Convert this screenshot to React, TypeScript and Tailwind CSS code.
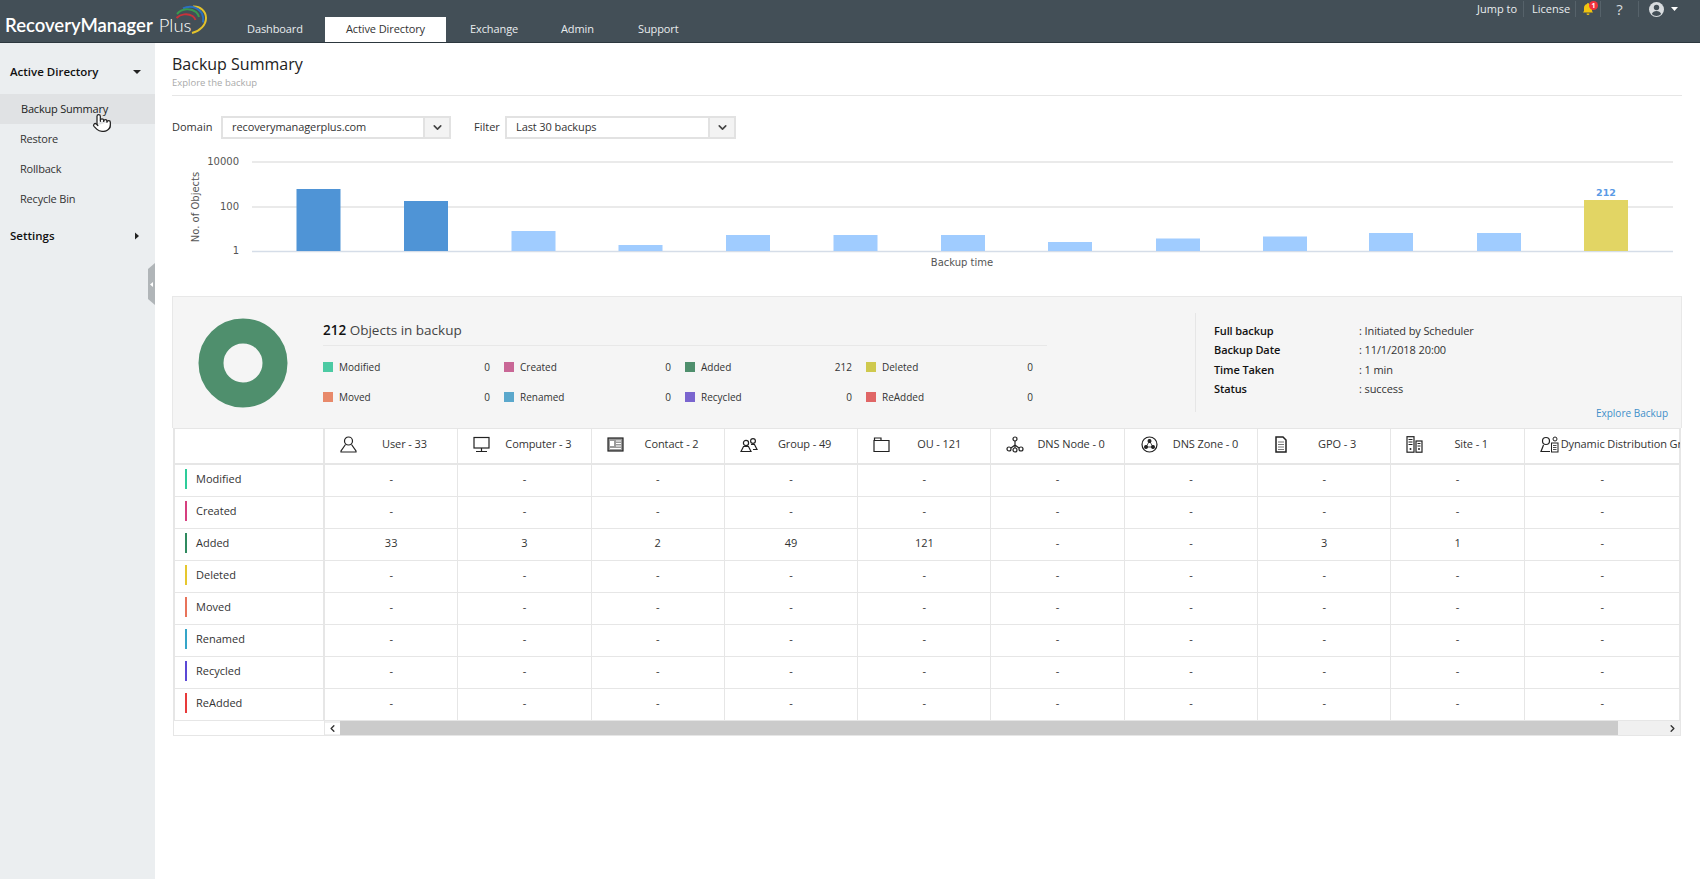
import { ChevronDown, ChevronLeft, ChevronRight, Pointer } from "lucide-react"
import type { ReactNode } from "react"

const bars = [
  { x: 124.5, top: 39, fill: "#4f94d6" },
  { x: 232, top: 51, fill: "#4f94d6" },
  { x: 339.5, top: 81, fill: "#a0ccff" },
  { x: 446.5, top: 95, fill: "#a0ccff" },
  { x: 554, top: 85, fill: "#a0ccff" },
  { x: 661.5, top: 85, fill: "#a0ccff" },
  { x: 769, top: 85, fill: "#a0ccff" },
  { x: 876, top: 92, fill: "#a0ccff" },
  { x: 984, top: 88.5, fill: "#a0ccff" },
  { x: 1091, top: 86.5, fill: "#a0ccff" },
  { x: 1197, top: 83, fill: "#a0ccff" },
  { x: 1305, top: 83, fill: "#a0ccff" },
  { x: 1412, top: 50, fill: "#e2d564" },
]

const legend = [
  { label: "Modified", value: "0", color: "bg-[#4ccaa3]" },
  { label: "Created", value: "0", color: "bg-[#c96796]" },
  { label: "Added", value: "212", color: "bg-[#4f8f6d]" },
  { label: "Deleted", value: "0", color: "bg-[#cfc94e]" },
  { label: "Moved", value: "0", color: "bg-[#e8896a]" },
  { label: "Renamed", value: "0", color: "bg-[#5ba8cc]" },
  { label: "Recycled", value: "0", color: "bg-[#7a65cf]" },
  { label: "ReAdded", value: "0", color: "bg-[#e06666]" },
]

const details = [
  ["Full backup", ": Initiated by Scheduler"],
  ["Backup Date", ": 11/1/2018 20:00"],
  ["Time Taken", ": 1 min"],
  ["Status", ": success"],
]

const Glyph = ({ w = 17, children }: { w?: number; children: ReactNode }) => (
  <svg width={w} height="17" viewBox={`0 0 ${w} 17`} fill="none" stroke="#222" strokeWidth="1.2" className="shrink-0">
    {children}
  </svg>
)

const columns: { title: string; pad: string; gap: string; icon: ReactNode }[] = [
  {
    title: "User - 33",
    pad: "pl-[15px]",
    gap: "gap-[25px]",
    icon: (
      <Glyph>
        <circle cx="8.5" cy="5" r="4" />
        <path d="M5.5 8.5 1 15v1h15v-1l-4.500-6.500" />
      </Glyph>
    ),
  },
  {
    title: "Computer - 3",
    pad: "pl-[15px]",
    gap: "gap-[15px]",
    icon: (
      <Glyph>
        <rect x="1" y="1.500" width="15" height="10.500" />
        <path d="M8.500 12v3M3 15.500h11" />
      </Glyph>
    ),
  },
  {
    title: "Contact - 2",
    pad: "pl-[15px]",
    gap: "gap-[21px]",
    icon: (
      <Glyph>
        <rect x="1" y="2" width="15" height="13" fill="#999" />
        <rect x="3" y="5" width="4" height="5" fill="#fff" stroke="none" />
        <path d="M9 5h5M9 7.500h5M9 10h5M3 12.500h11" stroke="#fff" strokeWidth="1" />
      </Glyph>
    ),
  },
  {
    title: "Group - 49",
    pad: "pl-[15px]",
    gap: "gap-[20px]",
    icon: (
      <Glyph w={18}>
        <circle cx="6" cy="7" r="2.600" />
        <circle cx="13" cy="5" r="2.400" />
        <path d="M1 15.500 3.500 10.500h5l2.500 5zM11 8.500h3.500l2.500 5h-4" />
      </Glyph>
    ),
  },
  {
    title: "OU - 121",
    pad: "pl-[15px]",
    gap: "gap-[27px]",
    icon: (
      <Glyph>
        <path d="M1 15.500V4.500h15v11zM1.500 4.500V2h6.500v2.500" />
      </Glyph>
    ),
  },
  {
    title: "DNS Node - 0",
    pad: "pl-[15px]",
    gap: "gap-[13px]",
    icon: (
      <Glyph w={18}>
        <circle cx="9" cy="3" r="2" />
        <circle cx="3" cy="13" r="2" />
        <circle cx="9" cy="14" r="2" />
        <circle cx="15" cy="13" r="2" />
        <path d="M9 5v7M5 12l4-3 4 3" />
      </Glyph>
    ),
  },
  {
    title: "DNS Zone - 0",
    pad: "pl-[16px]",
    gap: "gap-[15px]",
    icon: (
      <Glyph>
        <circle cx="8.500" cy="8.500" r="7.500" />
        <circle cx="8.500" cy="5" r="1.400" fill="#222" />
        <circle cx="5" cy="11" r="1.400" fill="#222" />
        <circle cx="12" cy="11" r="1.400" fill="#222" />
        <path d="M8.500 5 5 11h7z" strokeWidth="0.800" />
      </Glyph>
    ),
  },
  {
    title: "GPO - 3",
    pad: "pl-[17px]",
    gap: "gap-[31px]",
    icon: (
      <Glyph w={12}>
        <path d="M1 1h7l3 3v12H1z" strokeWidth="1.500" />
        <path d="M3 6h6M3 8.500h6M3 11h6M3 13.500h6" stroke="#777" strokeWidth="1" />
      </Glyph>
    ),
  },
  {
    title: "Site - 1",
    pad: "pl-[15px]",
    gap: "gap-[31px]",
    icon: (
      <Glyph>
        <rect x="1" y="0.700" width="7" height="15.500" />
        <rect x="10" y="5" width="6" height="11.200" />
        <path d="M2.500 3.500h4M2.500 6h4M2.500 8.500h4M11.500 7.500h3M11.500 10h3" strokeWidth="1" />
        <circle cx="4.500" cy="13" r="1" fill="#222" stroke="none" />
        <circle cx="13" cy="13" r="1" fill="#222" stroke="none" />
      </Glyph>
    ),
  },
  {
    title: "Dynamic Distribution Groups - 0",
    pad: "pl-[15px]",
    gap: "gap-[2px]",
    icon: (
      <Glyph w={19}>
        <circle cx="6" cy="5" r="3.500" />
        <path d="M3.500 9 1 15.500h9" />
        <circle cx="15" cy="3" r="2" strokeWidth="1" />
        <rect x="11.500" y="7" width="6.500" height="9" strokeWidth="1" />
        <path d="M13 9.500h3.500M13 11.500h3.500M13 13.500h3.500" strokeWidth="0.800" />
      </Glyph>
    ),
  },
]

const rows = [
  { label: "Modified", bar: "bg-[#2ecc9a]", values: [] as string[] },
  { label: "Created", bar: "bg-[#d63f7f]", values: [] as string[] },
  { label: "Added", bar: "bg-[#2f8a5f]", values: ["33", "3", "2", "49", "121", "-", "-", "3", "1", "-"] },
  { label: "Deleted", bar: "bg-[#e6c72e]", values: [] as string[] },
  { label: "Moved", bar: "bg-[#e8735a]", values: [] as string[] },
  { label: "Renamed", bar: "bg-[#35a5c8]", values: [] as string[] },
  { label: "Recycled", bar: "bg-[#5b48d6]", values: [] as string[] },
  { label: "ReAdded", bar: "bg-[#e83a3a]", values: [] as string[] },
]

const Caret = ({ right }: { right?: boolean }) => (
  <svg width="8" height="8" viewBox="0 0 8 8" fill="#222">
    {right ? <path d="M2 0.500 6 4 2 7.500z" /> : <path d="M0 2h8L4 6z" />}
  </svg>
)

const SelectBox = ({ value, width }: { value: string; width: string }) => (
  <div className={`flex h-[23px] ${width} items-center border-2 border-[#e2e2e2] bg-white`}>
    <span className="flex-1 pl-[9px] text-[11px] tracking-[-0.1px] text-[#333]">{value}</span>
    <span className="flex h-full w-[26px] items-center justify-center border-l-2 border-[#e2e2e2] bg-[#f3f3f3]">
      <ChevronDown size={13} strokeWidth={3} color="#444" />
    </span>
  </div>
)

export default function App() {
  return (
    <div className="flex h-[879px] w-[1700px] flex-col overflow-hidden bg-white font-['Open_Sans',sans-serif] text-[#333]">
      <header className="flex h-[43px] shrink-0 items-start justify-between border-b border-[#2c373e] bg-[#434f57]">
        <div className="flex h-full items-end">
          <div className="relative flex h-full w-[247px] items-center pl-[5px] pt-[9px] font-['Lato',sans-serif] text-[18.500px] whitespace-nowrap text-white">
            <span className="font-semibold">RecoveryManager</span>
            <span className="ml-[6px] font-light">Plus</span>
            <svg width="36" height="32" viewBox="0 0 36 32" fill="none" className="absolute left-[174px] top-[4px]">
              <path d="M19 2.500C26 2 32 7 32 14c0 7-6 13-14 15" stroke="#e3c22c" strokeWidth="2" />
              <path d="M9 4.500c6-3 14-2.500 19 5 1.500 3 1.500 6 1 9" stroke="#2c6fc0" strokeWidth="2" />
              <path d="M3 10c5-6 14-6 19-2 1.500 1.500 2.500 3 3 5" stroke="#3a9a50" strokeWidth="2" />
              <path d="M2.500 14c4-4 11-5 16-2 1.500 1 2.500 2.500 3 4" stroke="#c8323a" strokeWidth="2" />
            </svg>
          </div>
          <nav className="flex h-[25px] items-center text-[11px] tracking-[-0.1px] text-[#e9edef]">
            <span className="w-[78px]">Dashboard</span>
            <span className="flex h-full w-[121px] items-center justify-center bg-white text-[#333]">Active Directory</span>
            <span className="ml-[24px] w-[91px]">Exchange</span>
            <span className="w-[77px]">Admin</span>
            <span>Support</span>
          </nav>
        </div>
        <div className="flex h-[17px] items-center pt-[1px] text-[11px] text-[#e9edef]">
          <span className="w-[47px] border-r border-[#56626a] leading-[16px]">Jump to</span>
          <span className="w-[52px] border-r border-[#56626a] pl-[8px] leading-[16px]">License</span>
          <span className="relative flex h-full w-[25px] items-center border-r border-[#56626a] pl-[7px]">
            <svg width="10" height="12" viewBox="0 0 10 12" fill="#f1c40f">
              <path d="M5 0a1 1 0 0 1 1 1c2 .5 3 2 3 4v3l1 1.500H0L1 8V5c0-2 1-3.500 3-4a1 1 0 0 1 1-1zM3.500 10.500h3a1.500 1.500 0 0 1-3 0z" />
            </svg>
            <span className="absolute left-[13px] top-0 flex h-[9px] w-[9px] items-center justify-center rounded-full bg-[#f0323c] text-[7px] font-bold leading-none text-white">1</span>
          </span>
          <span className="flex h-full w-[38px] items-center justify-center border-r border-[#56626a] text-[15px] leading-[16px] text-[#d8dcdf]">?</span>
          <span className="ml-[10px] flex w-[15px] items-center">
            <svg width="15" height="15" viewBox="0 0 15 15">
              <circle cx="7.500" cy="7.500" r="7.500" fill="#d8dcdf" />
              <circle cx="7.500" cy="5.500" r="2.700" fill="#434f57" />
              <path d="M2.800 12c.8-2 2.500-3 4.700-3s3.900 1 4.700 3a6.500 6.500 0 0 1-9.400 0z" fill="#434f57" />
            </svg>
          </span>
          <svg width="7" height="4" viewBox="0 0 7 4" fill="#fff" className="ml-[7px] mr-[22px]">
            <path d="M0 0h7L3.500 4z" />
          </svg>
        </div>
      </header>

      <div className="flex flex-1">
        <aside className="relative w-[155px] shrink-0 bg-[#ebeef0] text-[11px] tracking-[-0.2px]">
          <div className="flex h-[51px] items-center justify-between pl-[10px] pr-[14px] pt-[7px] text-[11.500px] font-semibold tracking-normal text-[#111]">
            Active Directory
            <Caret />
          </div>
          <div className="relative flex h-[30px] items-center bg-[#e0e2e4] pl-[21px] text-[#222]">
            Backup Summary
            <Pointer size={20} fill="#fff" color="#222" strokeWidth={1.500} className="absolute left-[92px] top-[19px]" />
          </div>
          <div className="flex h-[30.500px] items-center pl-[20px]">Restore</div>
          <div className="flex h-[30px] items-center pl-[20px]">Rollback</div>
          <div className="flex h-[30px] items-center pl-[20px]">Recycle Bin</div>
          <div className="mt-[6px] flex h-[30px] items-center justify-between pl-[10px] pr-[14px] text-[11.500px] font-semibold tracking-normal text-[#111]">
            Settings
            <Caret right />
          </div>
          <div className="absolute left-[148px] top-[220px] flex h-[42px] w-[7px] items-center justify-center bg-[#b0b5b8] [clip-path:polygon(0_6px,100%_0,100%_100%,0_calc(100%-6px))]">
            <svg width="3" height="5" viewBox="0 0 3 5" fill="#fff">
              <path d="M3 0v5L0 2.500z" />
            </svg>
          </div>
        </aside>

        <main className="flex-1 pl-[17px] pr-[18px]">
          <div className="border-b border-[#e6e6e6] pb-[5px] pt-[9px]">
            <h1 className="text-[16px] leading-[24px] text-[#222]">Backup Summary</h1>
            <p className="text-[9.500px] leading-[14px] text-[#aaa]">Explore the backup</p>
          </div>

          <div className="mt-[20px] flex items-center text-[11px]">
            <span className="w-[49px]">Domain</span>
            <SelectBox value="recoverymanagerplus.com" width="w-[230px]" />
            <span className="ml-[23px] w-[31px]">Filter</span>
            <SelectBox value="Last 30 backups" width="w-[231px]" />
          </div>

          <svg width="1510" height="146" viewBox="0 0 1510 146" className="mt-[11px] block font-['DejaVu_Sans',sans-serif]">
            <path d="M80 12h1421M80 57h1421" stroke="#e4e4e4" strokeWidth="1.500" />
            <path d="M80 101.500h1421" stroke="#d5dde8" strokeWidth="1.500" />
            {bars.map((b) => (
              <rect key={b.x} x={b.x} y={b.top} width="44" height={101 - b.top} fill={b.fill} />
            ))}
            <g fontSize="10" fill="#555" textAnchor="end">
              <text x="67" y="15">10000</text>
              <text x="67" y="60">100</text>
              <text x="67" y="104">1</text>
            </g>
            <text x="0" y="0" fontSize="10" fill="#555" textAnchor="middle" transform="translate(27 57) rotate(-90)">No. of Objects</text>
            <text x="790" y="116" fontSize="10" fill="#555" textAnchor="middle">Backup time</text>
            <text x="1434" y="46" fontSize="9.500" fontWeight="700" fill="#5a9be6" textAnchor="middle">212</text>
          </svg>

          <section className="flex h-[132px] border border-b-0 border-[#e8e8e8] bg-[#f5f5f5]">
            <div className="flex w-[115px] shrink-0 items-center pl-[25px]">
              <svg width="90" height="90" viewBox="0 0 90 90">
                <circle cx="45" cy="45" r="32" fill="none" stroke="#4f8f6d" strokeWidth="25" />
              </svg>
            </div>
            <div className="ml-[35px] w-[724px] shrink-0 pt-[23px]">
              <div className="border-b border-[#e8e8e8] pb-[5px] text-[13.500px] leading-[20px] text-[#444]">
                <b className="font-semibold text-[#111]">212</b> Objects in backup
              </div>
              <div className="mt-[6px] grid grid-cols-[repeat(4,181px)] text-[10px]">
                {legend.map((l) => (
                  <div key={l.label} className="flex h-[30px] items-center pr-[14px]">
                    <span className={`h-[10px] w-[10px] ${l.color}`} />
                    <span className="ml-[6px] flex-1">{l.label}</span>
                    <span>{l.value}</span>
                  </div>
                ))}
              </div>
            </div>
            <div className="ml-[148px] flex-1 pr-[13px] pt-[16px]">
              <div className="h-[99px] border-l border-[#e6e6e6] pl-[18px] pt-[8px] text-[11px] tracking-[-0.1px]">
                {details.map(([k, v]) => (
                  <div key={k} className="flex h-[19.500px] items-center">
                    <span className="w-[145px] font-semibold text-[#111]">{k}</span>
                    <span>{v}</span>
                  </div>
                ))}
              </div>
              <div className="-mt-[7px] text-right text-[10px] leading-[16px] text-[#3f8fc9]">Explore Backup</div>
            </div>
          </section>

          <div className="ml-[1px] w-[1508px] border-x-2 border-t border-[#e6e6e6] text-[11px]">
            <div className="grid grid-cols-[150px_repeat(9,133.300px)_156.300px]">
              <div className="h-[36px] border-b-2 border-r-2 border-[#e6e6e6]" />
              {columns.map((c) => (
                <div key={c.title} className={`flex h-[36px] items-center overflow-hidden whitespace-nowrap border-b-2 border-r border-[#e6e6e6] pb-[3px] tracking-[-0.1px] ${c.pad} ${c.gap}`}>
                  {c.icon}
                  <span>{c.title}</span>
                </div>
              ))}
              {rows.map((r) => (
                <div key={r.label} className="contents">
                  <div className="flex h-[32px] items-center gap-[9px] border-b border-r-2 border-[#e6e6e6] pb-[3px] pl-[10px] text-[11px]">
                    <span className={`h-[20px] w-[2px] ${r.bar}`} />
                    {r.label}
                  </div>
                  {columns.map((c, i) => (
                    <div key={c.title} className="flex h-[32px] items-center justify-center border-b border-r border-[#e6e6e6] pb-[3px] text-[11px]">
                      {r.values[i] ?? "-"}
                    </div>
                  ))}
                </div>
              ))}
            </div>
          </div>
          <div className="ml-[1px] flex h-[15px] w-[1508px] border border-t-0 border-[#e6e6e6]">
            <div className="w-[151px] border-r border-[#e6e6e6]" />
            <div className="flex flex-1 items-center bg-[#f0f0f0]">
              <span className="flex w-[15px] justify-center bg-white">
                <ChevronLeft size={11} strokeWidth={3} color="#333" />
              </span>
              <span className="h-full w-[1278px] bg-[#cbcbcb]" />
              <span className="flex flex-1 justify-end pr-[2px]">
                <ChevronRight size={11} strokeWidth={3} color="#333" />
              </span>
            </div>
          </div>
        </main>
      </div>
    </div>
  )
}
